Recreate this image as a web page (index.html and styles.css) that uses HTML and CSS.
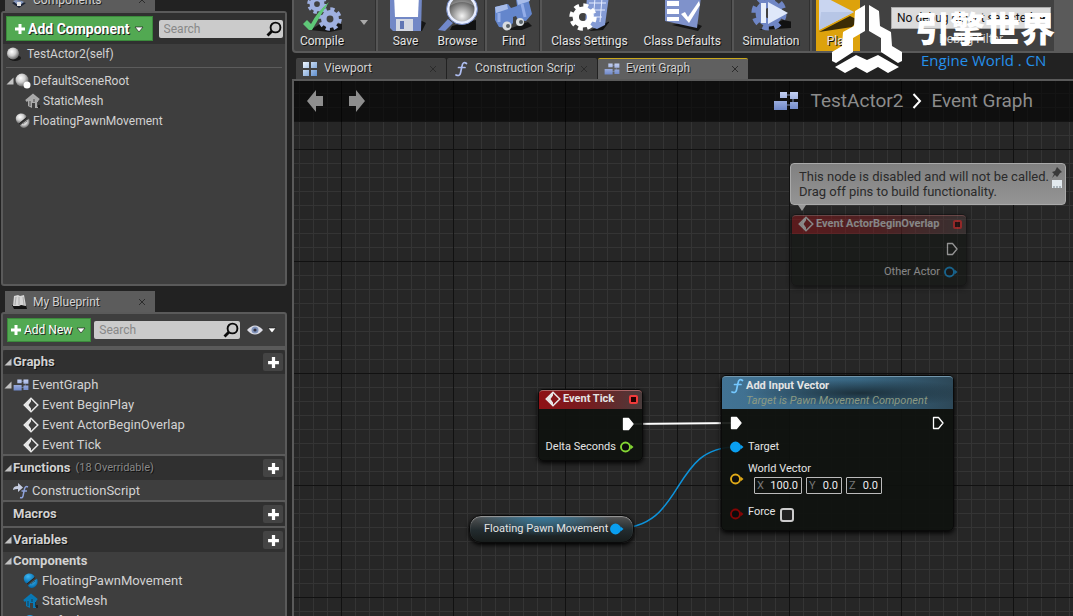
FILE: index.html
```html
<!DOCTYPE html>
<html lang="en">
<head>
    <meta charset="utf-8">
    <title>TestActor2 - Blueprint Editor</title>
    <meta name="viewport" content="width=device-width, initial-scale=1">
    <link rel="stylesheet" href="styles.css">
</head>
<body>
    <!-- Shared icons -->
    <svg class="defs" width="0" height="0">
        <defs>
            <linearGradient id="blue" x1="0" y1="0" x2="0" y2="1">
                <stop offset="0" stop-color="#c3cff2"/>
                <stop offset="1" stop-color="#6f88c8"/>
            </linearGradient>
            <linearGradient id="pane" x1="0" y1="0" x2="1" y2="1">
                <stop offset="0" stop-color="#eef6ff"/>
                <stop offset="1" stop-color="#5f8fce"/>
            </linearGradient>
            <radialGradient id="ball" cx="40%" cy="35%" r="65%">
                <stop offset="0" stop-color="#fff"/>
                <stop offset="0.5" stop-color="#d0d0d0"/>
                <stop offset="1" stop-color="#666"/>
            </radialGradient>
            <radialGradient id="blueBall" cx="40%" cy="30%" r="70%">
                <stop offset="0" stop-color="#3fb8f5"/>
                <stop offset="1" stop-color="#0067a8"/>
            </radialGradient>
            <radialGradient id="lens" cx="50%" cy="75%" r="75%">
                <stop offset="0" stop-color="#f4f4f4"/>
                <stop offset="0.6" stop-color="#777"/>
                <stop offset="1" stop-color="#222"/>
            </radialGradient>
        </defs>
        <symbol id="i-plus" viewBox="0 0 12 12"><path d="M4.500 1h3v3.500H11v3H7.500V11h-3V7.500H1v-3h3.500z" fill="#fff"/></symbol>
        <symbol id="i-down" viewBox="0 0 10 8"><path d="M1 2h8L5 7z" fill="#fff" stroke="#111" stroke-width="0.600"/></symbol>
        <symbol id="i-close" viewBox="0 0 8 8"><path d="M1 1l6 6M7 1L1 7" stroke="currentColor" fill="none"/></symbol>
        <symbol id="i-search" viewBox="0 0 16 16"><circle cx="9.500" cy="6.500" r="4.900" fill="none" stroke="#0a0a0a" stroke-width="1.900"/><path d="M6 10l-4.500 4.500" stroke="#0a0a0a" stroke-width="2.800"/></symbol>
        <symbol id="i-tri" viewBox="0 0 8 8"><path d="M7.500 0.500v7H0.500z" fill="#c2c2c2"/></symbol>
        <symbol id="i-graph" viewBox="0 0 26 20">
            <path d="M12 4h6M13 14h5M20 8v5" stroke="#8191b8" stroke-width="1"/>
            <path d="M7 1h7v6H7zM17 1h8v7h-8zM1 10h13v9H1zM17 11h8v7h-8z" fill="url(#blue)"/>
        </symbol>
        <symbol id="i-event" viewBox="0 0 16 16"><path d="M8 1.200L14.800 8 8 14.800 1.200 8z" fill="none" stroke="#e8e8e8" stroke-width="1.500"/><path d="M8 1.500v3L5.500 8 8 11.500v3L1.500 8z" fill="#e8e8e8"/></symbol>
        <symbol id="i-func" viewBox="0 0 16 16"><path d="M13.500 2.500C11 0.500 9.500 2 9 5L7.500 12C7 14.500 5.500 15 3 14M5.500 6.500h6.500" fill="none" stroke="currentColor" stroke-width="1.700" stroke-linecap="round"/></symbol>
        <symbol id="i-move" viewBox="0 0 16 16"><path d="M1 7C0 3 3 0.500 6.500 0.500 9 0.500 11 2 11.500 4L4 10.500C2.500 10 1.300 8.500 1 7z" fill="var(--orb)"/><path d="M5 12.500L14 5.500c2 4-1 9.500-5.500 9.500-1.500 0-3-1-3.500-2.500z" fill="var(--orb)"/><path d="M4 11L12 4.500" stroke="#222" stroke-width="1"/><path d="M8 11l4-3" stroke="#222" stroke-width="1" opacity=".5"/></symbol>
        <symbol id="i-mesh" viewBox="0 0 16 16"><path d="M11 12l4 0v3h-4z" fill="#111" opacity=".6"/><path d="M3 7l5-4 5 4v8h-3v-5H7v5l-4-2z" fill="var(--mesh)"/><path d="M1 8L8 2l6 5" fill="none" stroke="var(--mesh)" stroke-width="2.400"/><path d="M5 8v5M9 6v3M12.500 9v5" stroke="#222" opacity=".7"/></symbol>
        <symbol id="i-exec" viewBox="0 0 12 14"><path d="M1.500 1.500h5L11 7l-4.500 5.500h-5z" fill="var(--fill, none)" stroke="currentColor" stroke-width="1.300" stroke-linejoin="round"/></symbol>
        <symbol id="i-pin" viewBox="0 0 14 12"><circle cx="5.500" cy="6" r="4.500" fill="var(--fill, #0c0c0c)" stroke="currentColor" stroke-width="1.900"/><path d="M10.500 3.500L13.500 6l-3 2.500z" fill="currentColor"/></symbol>
        <symbol id="i-arrow" viewBox="0 0 18 24"><path d="M1 12L10 1v6h7v10h-7v6z" fill="#8e8e8e"/></symbol>
        <symbol id="i-gear" viewBox="0 0 24 24"><circle cx="12" cy="12" r="9.500" fill="none" stroke="currentColor" stroke-width="4.500" stroke-dasharray="4 3.461"/><circle cx="12" cy="12" r="6.200" fill="none" stroke="currentColor" stroke-width="5.500"/></symbol>
    </svg>

    <div class="editor">
        <aside class="sidebar">
            <div class="dock-tab"><svg class="icon" viewBox="0 0 16 16"><path d="M1 11l4-2 6 1 4 1-7 5z" fill="#1c2434"/><path d="M2 9l3-1 6 1 2 1-5 4z" fill="#8496bd"/><path d="M6 10h4v4H6z" fill="#e4e4e4"/></svg><span>Components</span><svg class="close"><use href="#i-close"/></svg></div>
            <section class="panel components">
                <div class="panel-bar">
                    <button class="add-btn large"><svg class="plus"><use href="#i-plus"/></svg>Add Component<svg class="down"><use href="#i-down"/></svg></button>
                    <label class="search"><input type="text" placeholder="Search" aria-label="Search components"><svg><use href="#i-search"/></svg></label>
                </div>
                <div class="self"><svg class="icon" viewBox="0 0 16 16"><ellipse cx="9" cy="12" rx="6" ry="3" fill="#181818"/><circle cx="7" cy="7.500" r="6" fill="url(#ball)"/></svg>TestActor2(self)</div>
                <ul class="tree parts">
                    <li class="root"><svg class="tri"><use href="#i-tri"/></svg><svg class="icon" viewBox="0 0 16 16"><circle cx="7" cy="7" r="6.500" fill="url(#ball)"/><circle cx="12" cy="12" r="3.500" fill="#fff"/></svg>DefaultSceneRoot</li>
                    <li class="child"><svg class="icon"><use href="#i-mesh"/></svg>StaticMesh</li>
                    <li class="peer"><svg class="icon"><use href="#i-move"/></svg>FloatingPawnMovement</li>
                </ul>
            </section>

            <div class="dock-tab second"><svg class="icon" viewBox="0 0 16 16"><path d="M1 11h14l1 4H3z" fill="#111"/><path d="M3 2l4-1 2 1 4-1 2 11-5-1-2 1-6 0z" fill="#d5d5d5"/><path d="M8 3v8M5 3l-1 8M12 3l1 8" stroke="#aaa"/></svg><span>My Blueprint</span><svg class="close"><use href="#i-close"/></svg></div>
            <section class="panel blueprint">
                <div class="panel-bar">
                    <button class="add-btn"><svg class="plus"><use href="#i-plus"/></svg>Add New<svg class="down"><use href="#i-down"/></svg></button>
                    <label class="search"><input type="text" placeholder="Search" aria-label="Search blueprint"><svg><use href="#i-search"/></svg></label>
                    <button class="view-btn" aria-label="View options"><svg class="eye" viewBox="0 0 18 12"><path d="M1 6q8-9 16 0-8 9-16 0z" fill="#dcdce4"/><circle cx="9" cy="6" r="3.500" fill="#8093ba"/><circle cx="9" cy="6" r="1.600" fill="#334"/></svg><svg class="down"><use href="#i-down"/></svg></button>
                </div>
                <div class="group">
                    <h2><svg class="tri"><use href="#i-tri"/></svg>Graphs<button aria-label="Add graph"><svg><use href="#i-plus"/></svg></button></h2>
                    <ul class="tree">
                        <li class="graph-item"><svg class="tri"><use href="#i-tri"/></svg><svg class="icon"><use href="#i-graph"/></svg>EventGraph</li>
                        <li class="leaf"><svg class="icon"><use href="#i-event"/></svg>Event BeginPlay</li>
                        <li class="leaf"><svg class="icon"><use href="#i-event"/></svg>Event ActorBeginOverlap</li>
                        <li class="leaf"><svg class="icon"><use href="#i-event"/></svg>Event Tick</li>
                    </ul>
                </div>
                <div class="group">
                    <h2><svg class="tri"><use href="#i-tri"/></svg>Functions <small>(18 Overridable)</small><button aria-label="Add function"><svg><use href="#i-plus"/></svg></button></h2>
                    <ul class="tree">
                        <li class="script"><svg class="icon" viewBox="0 0 16 16"><path d="M0 7q0-4 5-4V0l5 4.500L5 9V6Q2 6 0 7z" fill="#c6cde0"/><path d="M15 4c-2-1-3 0-3.500 2L10 13c-.5 2-1.500 2-3 1.500M8.500 8H14" fill="none" stroke="#8fa3dc" stroke-width="1.500"/></svg>ConstructionScript</li>
                    </ul>
                </div>
                <div class="group">
                    <h2 class="no-tri">Macros<button aria-label="Add macro"><svg><use href="#i-plus"/></svg></button></h2>
                </div>
                <div class="group">
                    <h2><svg class="tri"><use href="#i-tri"/></svg>Variables<button aria-label="Add variable"><svg><use href="#i-plus"/></svg></button></h2>
                    <h3><svg class="tri"><use href="#i-tri"/></svg>Components</h3>
                    <ul class="tree">
                        <li class="leaf"><svg class="icon azure"><use href="#i-move"/></svg>FloatingPawnMovement</li>
                        <li class="leaf"><svg class="icon azure"><use href="#i-mesh"/></svg>StaticMesh</li>
                        <li class="leaf"><svg class="icon" viewBox="0 0 16 16"><circle cx="7" cy="8" r="6" fill="url(#blueBall)"/></svg>DefaultSceneRoot</li>
                    </ul>
                </div>
            </section>
        </aside>

        <main class="workspace">
            <div class="toolbar">
                <div class="tool-group compile">
                    <button class="tool"><svg viewBox="0 0 40 40"><path d="M8 38l10-6h22l2 5-14 3z" fill="#151515"/><g color="#9fb0e0"><use href="#i-gear" x="5" y="2" width="20" height="20"/><use href="#i-gear" x="16" y="15" width="24" height="24"/></g><path d="M1 32l4-4 4 4Q15 20 27 10 18 24 10 38H7z" fill="#5fc878"/></svg>Compile</button>
                    <button class="tool-menu" aria-label="Compile options"><svg viewBox="0 0 8 5"><path d="M0 0h8L4 5z" fill="#aaa"/></svg></button>
                </div>
                <div class="tool-group save">
                    <button class="tool"><svg viewBox="0 0 40 40"><path d="M10 39h26l4-8-4-2z" fill="#151515"/><path d="M4 3h32l-1 36H7l-3-3z" fill="#7288c6"/><path d="M8 3h25l-1 22H9z" fill="#fff"/><path d="M10 27h17v12H10z" fill="#d3d8e2"/><path d="M14 29h4v8h-4z" fill="#6076b4"/></svg>Save</button>
                    <button class="tool"><svg viewBox="0 0 40 40"><path d="M14 34l24-6v10H12z" fill="#111"/><path d="M0 38l10-11 5 4-8 8z" fill="#7188cb"/><circle cx="24" cy="17" r="14" fill="url(#lens)" stroke="#e7edff" stroke-width="3"/><circle cx="24" cy="17" r="15.500" fill="none" stroke="#6e83bd"/><path d="M12 14q12-8 24 0V9q-10-9-21-2z" fill="#fff" opacity=".25"/></svg>Browse</button>
                </div>
                <div class="tool-group find">
                    <button class="tool"><svg viewBox="0 0 40 40"><path d="M12 38l22-8 4 4-10 4z" fill="#151515"/><path d="M1 15l13-3 3 4 6-2-1-7 11-5 5 20-6 7-8-1-2-4-3 1v6l-5 5-9-1-4-7z" fill="#6486cc"/><path d="M1 15l12-3 1 5-12 4zM23 8l11-5 2 6-12 4z" fill="#a7bce9"/><path d="M5 21v9M28 12l3 13" stroke="#93ade8" stroke-width="3"/><circle cx="13" cy="34" r="4.500" fill="#d8dcdf"/><circle cx="26" cy="30" r="4" fill="#d8dcdf"/><circle cx="14" cy="34" r="2" fill="#596268"/><circle cx="27" cy="30" r="2" fill="#596268"/></svg>Find</button>
                </div>
                <div class="tool-group class-tools">
                    <button class="tool"><svg viewBox="0 0 40 40"><path d="M20 39l14-1 7-9z" fill="#111"/><path d="M18 4h22l-4 29-8 4-12-4z" fill="#849bd5"/><path d="M20 11h17M20 18h16M20 25h13M26 6l-2 24M33 6l-2 24" stroke="#e3ebff"/><g color="#fff"><use href="#i-gear" x="0" y="11" width="28" height="28"/></g></svg>Class Settings</button>
                    <button class="tool"><svg viewBox="0 0 40 40"><path d="M10 33l26 6 4-5-12-5z" fill="#151515"/><path d="M3 5h36l-4 31-32-7z" fill="#7f92cb"/><path d="M5 9h12v5H5zM5 17h12v5H5zM5 25h12v4H5z" fill="#fff"/><path d="M19 22l4-2 3 5L37 9l1 4-11 18z" fill="#fff"/></svg>Class Defaults</button>
                </div>
                <div class="tool-group simulation">
                    <button class="tool"><svg viewBox="0 0 40 40"><path d="M8 38l24-10 10 2-2 6z" fill="#111"/><g color="#6f86c5"><use href="#i-gear" x="0" y="3" width="36" height="36"/></g><path d="M10 11h5v20h-5z" fill="#e8effa"/><path d="M17 10l20 11-20 11z" fill="#dfe8fa"/></svg>Simulation</button>
                </div>
                <button class="tool play"><svg viewBox="0 0 40 40"><path d="M1 40l31-16 8 4-6 7z" fill="#3b2c05"/><path d="M1 2l35 18L1 38z" fill="#c9d5f0"/><path d="M1 38L3 20l33 0z" fill="#b7c6e6"/></svg>Play</button>
                <div class="debug">
                    <select id="debugObject"><option>No debug object selected</option></select>
                    <label for="debugObject">Debug Filter</label>
                </div>
            </div>

            <nav class="doc-tabs">
                <a href="#viewport"><svg class="icon" viewBox="0 0 16 16"><path d="M1 1h6v6H1zM9 1h6v6H9zM1 9h6v6H1zM9 9h6v6H9z" fill="url(#pane)"/></svg><span>Viewport</span><svg class="close"><use href="#i-close"/></svg></a>
                <a href="#construction"><svg class="icon func"><use href="#i-func"/></svg><span>Construction Script</span><svg class="close"><use href="#i-close"/></svg></a>
                <a href="#graph" class="active"><svg class="icon"><use href="#i-graph"/></svg><span>Event Graph</span><svg class="close"><use href="#i-close"/></svg></a>
            </nav>

            <div class="graph" id="graph">
                <header class="graph-bar">
                    <button aria-label="Back"><svg><use href="#i-arrow"/></svg></button>
                    <button class="forward" aria-label="Forward"><svg><use href="#i-arrow"/></svg></button>
                    <div class="crumbs"><svg class="crumb-icon"><use href="#i-graph"/></svg><a href="#actor">TestActor2</a><svg class="chevron" viewBox="0 0 10 16"><path d="M1.500 1L8 8l-6.500 7" fill="none" stroke="#fff" stroke-width="2"/></svg><span>Event Graph</span></div>
                </header>

                <svg class="wires">
                    <path d="M334 343L440 342" stroke="#fff" stroke-width="2"/>
                    <path d="M320 448C394 448 374 366 442 366" stroke="#0d93db" stroke-width="1.500"/>
                </svg>

                <div class="bubble">
                    <p>This node is disabled and will not be called.<br>Drag off pins to build functionality.</p>
                    <svg viewBox="0 0 12 24"><path d="M6 1l5 5-2 1-2 3-1 1-2-2-3 3 2-4-2-2 3-1z" fill="#3a3a3a"/><path d="M1 14h10v8H1z" fill="#e2e9ee"/><path d="M3 20v2M6 20v2M9 20v2" stroke="#73818b"/></svg>
                </div>

                <article class="node overlap">
                    <h4><svg class="icon"><use href="#i-event"/></svg>Event ActorBeginOverlap<i class="delegate"></i></h4>
                    <div class="pin out exec"><svg class="exec-pin"><use href="#i-exec"/></svg></div>
                    <div class="pin out"><span>Other Actor</span><svg class="data-pin object"><use href="#i-pin"/></svg></div>
                </article>

                <article class="node tick">
                    <h4><svg class="icon"><use href="#i-event"/></svg>Event Tick<i class="delegate"></i></h4>
                    <div class="pin out exec"><svg class="exec-pin linked"><use href="#i-exec"/></svg></div>
                    <div class="pin out"><span>Delta Seconds</span><svg class="data-pin float"><use href="#i-pin"/></svg></div>
                </article>

                <article class="node getter"><span>Floating Pawn Movement</span><svg class="data-pin object linked"><use href="#i-pin"/></svg></article>

                <article class="node add-input">
                    <header>
                        <svg class="icon"><use href="#i-func"/></svg>
                        <div><h4>Add Input Vector</h4><p>Target is Pawn Movement Component</p></div>
                    </header>
                    <div class="pin ends"><svg class="exec-pin linked"><use href="#i-exec"/></svg><svg class="exec-pin"><use href="#i-exec"/></svg></div>
                    <div class="pin target"><svg class="data-pin object linked"><use href="#i-pin"/></svg><span>Target</span></div>
                    <div class="pin vector"><svg class="data-pin vec"><use href="#i-pin"/></svg>
                        <div class="value">
                            <span>World Vector</span>
                            <div class="axes">
                                <label class="wide">X<input type="text" value="100.0"></label>
                                <label>Y<input type="text" value="0.0"></label>
                                <label>Z<input type="text" value="0.0"></label>
                            </div>
                        </div>
                    </div>
                    <div class="pin force"><svg class="data-pin bool"><use href="#i-pin"/></svg><label class="value" for="force">Force</label><input type="checkbox" id="force"></div>
                </article>
            </div>
        </main>
    </div>

    <!-- Site watermark -->
    <div class="watermark">
        <svg viewBox="0 0 72 70"><path d="M33 1L23 7 22 22 11 28 10 42 0 48v9l4 2 17-11V34l12-7zM37 1l10 6 1 15 11 6 1 14 10 6v9l-4 2-17-11V34l-12-7zM3 63l21-12 11 5 11-5 21 12-11 6-10-6-11 6-11-6-11 6z" fill="#fff"/></svg>
        <div><strong lang="zh">引擎世界</strong><span>Engine World . CN</span></div>
    </div>
</body>
</html>
```
FILE: styles.css
```css
* {
    box-sizing: border-box;
}
body {
    margin: 0;
    height: 100vh;
    overflow: hidden;
    background: #222;
    color: #d2d2d2;
    font: 13px/20px Roboto, sans-serif;
}
button, input, select {
    font: inherit;
    color: inherit;
}
button {
    padding: 0;
    border: 0;
    background: none;
}
ul, h2, h3, h4, p {
    margin: 0;
    padding: 0;
    list-style: none;
}
svg {
    flex: none;
}
.defs {
    position: absolute;
}
.editor {
    display: flex;
    gap: 5px;
    height: 100vh;
    overflow: hidden;
}
.icon {
    width: 16px;
    height: 16px;
    --orb: url(#ball);
    --mesh: #aaa;
}
.azure {
    --orb: url(#blueBall);
    --mesh: #0879b5;
}
.func {
    color: #aebdf0;
}
.close {
    width: 8px;
    height: 8px;
    color: #2c2c2c;
}
.plus {
    width: 12px;
    height: 12px;
}
.down {
    width: 10px;
    height: 8px;
}
.tri {
    width: 8px;
    height: 8px;
}

/* Sidebar */
.sidebar {
    flex: none;
    width: 287px;
    margin-top: -11px;
    padding-left: 1px;
}
.dock-tab {
    display: flex;
    align-items: center;
    width: 150px;
    height: 22px;
    margin-left: 4px;
    padding: 0 9px 0 6px;
    background: #5c5c5c;
    font-size: 12px;
    text-shadow: 1px 1px #222;
}
.dock-tab span {
    flex: 1;
    margin-left: 6px;
}
.dock-tab.second {
    height: 21px;
    margin-top: 5px;
}
.panel {
    border: 2px solid #5a5a5a;
    border-radius: 3px;
    background: #3e3e3e;
}
.components {
    height: 275px;
    font-size: 12px;
}
.panel-bar {
    display: flex;
    align-items: center;
    height: 32px;
}
.components .panel-bar {
    padding: 0 2px 0 3px;
    gap: 6px;
    height: 31px;
    background: #303030;
}
.blueprint .panel-bar {
    padding: 0 8px 0 4px;
    gap: 3px;
    margin-bottom: 4px;
    box-shadow: 0 4px #5a5a5a;
}
.add-btn {
    display: flex;
    flex: none;
    align-items: center;
    gap: 2px;
    height: 24px;
    padding: 0 4px 0 2px;
    border: 1px solid #3b8a3c;
    background: #52a952;
    color: #fff;
    font-size: 12px;
    text-shadow: 1px 1px #222;
}
.add-btn .down {
    margin-left: 2px;
}
.add-btn.large {
    height: 25px;
    padding: 0 8px 0 7px;
    gap: 2px;
    font-size: 14px;
    font-weight: bold;
}
.search {
    display: flex;
    flex: 1;
    align-items: center;
    min-width: 0;
    height: 18px;
    padding: 0 1px 0 5px;
    border-radius: 2px;
    background: #cbcbcb;
}
.search input {
    flex: 1;
    min-width: 0;
    padding: 0;
    border: 0;
    background: none;
    color: #222;
    font-size: 12px;
    outline: none;
}
.search input::placeholder {
    color: #888;
}
.search svg {
    width: 16px;
    height: 16px;
}
.view-btn {
    display: flex;
    align-items: center;
    gap: 3px;
    margin-left: 3px;
}
.eye {
    width: 18px;
    height: 12px;
}
.self, .tree li, h3 {
    display: flex;
    align-items: center;
    height: 20px;
    white-space: nowrap;
}
.tree li {
    padding-top: 2px;
}
.self {
    padding-left: 3px;
    gap: 5px;
}
.parts {
    margin: 3px 3px 0;
    padding-top: 2px;
    border-top: 1px solid #5c5c5c;
}
.root .icon {
    margin: 0 2px 0 1px;
}
.child {
    padding-left: 19px;
    gap: 2px;
}
.peer {
    padding-left: 9px;
    gap: 2px;
}
.group {
    border-bottom: 2px solid #5a5a5a;
}
h2 {
    display: flex;
    align-items: center;
    height: 24px;
    padding: 0 2px 0 1px;
    background: #303030;
    border-radius: 3px 3px 0 0;
    font-size: 13px;
    text-shadow: 1px 1px #111;
}
h2.no-tri {
    padding-left: 10px;
}
h2 .tri, h3 .tri {
    margin-right: 1px;
}
h2 small {
    margin-left: 5px;
    color: #888;
    font-size: 11px;
    font-weight: normal;
}
h2 button {
    display: grid;
    place-items: center;
    width: 20px;
    height: 18px;
    margin-left: auto;
    border-radius: 2px;
    background: #444;
}
h2 button svg {
    width: 13px;
    height: 13px;
}
h3 {
    height: 18px;
    padding-left: 1px;
    font-size: 13px;
}
.graph-item {
    padding-left: 1px;
}
.graph-item .icon {
    margin: 0 3px 0 1px;
}
.leaf {
    padding-left: 20px;
    gap: 3px;
}
.script {
    padding-left: 10px;
    gap: 3px;
}

/* Toolbar */
.workspace {
    display: flex;
    flex: 1;
    flex-direction: column;
    min-width: 0;
}
.toolbar {
    display: flex;
    flex: none;
    height: 62px;
    margin-top: -9px;
    border: solid #5a5a5a;
    border-width: 0 19px 2px 2px;
    border-radius: 0 0 0 4px;
    background: #414141;
}
.tool-group {
    display: flex;
    justify-content: center;
    border-right: 2px solid #555;
    box-shadow: inset -1px 0 #303030;
}
.tool {
    display: flex;
    flex-direction: column;
    align-items: center;
    padding-top: 1px;
    color: #e4e4e4;
    font-size: 12px;
    line-height: 18px;
    text-shadow: 1px 1px #111;
    white-space: nowrap;
}
.tool svg {
    width: 40px;
    height: 40px;
}
.compile {
    gap: 16px;
    width: 84px;
    padding-right: 2px;
}
.tool-menu svg {
    width: 8px;
    height: 5px;
}
.save {
    gap: 12px;
    width: 109px;
}
.find {
    width: 55px;
}
.class-tools {
    gap: 16px;
    width: 192px;
    padding-right: 2px;
}
.simulation {
    width: 78px;
    padding-right: 2px;
}
.play {
    width: 44px;
    margin-left: 4px;
    background: #dda20c;
}
.debug {
    display: flex;
    flex-direction: column;
    align-items: center;
    width: 160px;
    margin-left: 31px;
    padding-top: 16px;
    font-size: 12px;
}
.debug select {
    width: 100%;
    height: 22px;
    padding: 0 1px;
    border: 1px solid #aaa;
    background: #dcdcdc;
    color: #111;
}

/* Document tabs */
.doc-tabs {
    display: flex;
    flex: none;
    gap: 1px;
    margin-top: 5px;
    padding-left: 4px;
}
.doc-tabs a {
    display: flex;
    align-items: center;
    width: 150px;
    height: 21px;
    padding: 0 9px 0 6px;
    border-top: 1px solid #444;
    border-radius: 2px 2px 0 0;
    background: #414141;
    color: #d2d2d2;
    font-size: 12px;
    line-height: 18px;
    text-decoration: none;
    text-shadow: 1px 1px #181818;
}
.doc-tabs span {
    flex: 1;
    overflow: hidden;
    margin: 0 5px 2px 6px;
    white-space: nowrap;
}
.doc-tabs .active {
    border-color: #c9a81c;
    background: #606060;
}

/* Graph canvas */
.graph {
    position: relative;
    flex: 1;
    overflow: hidden;
    border: solid #5a5a5a;
    border-width: 2px 0 0 2px;
    background-color: #262626;
    background-image:
        linear-gradient(90deg, #111 1px, transparent 1px),
        linear-gradient(#111 1px, transparent 1px),
        linear-gradient(90deg, #343434 1px, transparent 1px),
        linear-gradient(#343434 1px, transparent 1px);
    background-size: 112px 112px, 112px 112px, 14px 14px, 14px 14px;
    background-position: 47px 68px, 47px 68px, 5px 12px, 5px 12px;
}
.graph-bar {
    display: flex;
    align-items: center;
    height: 41px;
    padding: 0 40px 2px 12px;
    gap: 24px;
    background: rgba(0, 0, 0, 0.6);
}
.graph-bar button svg {
    display: block;
    width: 18px;
    height: 24px;
}
.forward svg {
    transform: scaleX(-1);
}
.crumbs {
    display: flex;
    align-items: center;
    margin-left: auto;
    color: #8c8c8c;
    font-size: 19px;
}
.crumbs a {
    color: inherit;
    text-decoration: none;
}
.crumb-icon {
    width: 26px;
    height: 20px;
    margin-right: 12px;
}
.chevron {
    width: 10px;
    height: 16px;
    margin: 0 9px;
}
.wires {
    position: absolute;
    top: 0;
    left: 0;
    width: 100%;
    height: 100%;
    fill: none;
}
.bubble {
    position: absolute;
    top: 82px;
    left: 496px;
    display: flex;
    justify-content: space-between;
    width: 276px;
    height: 42px;
    padding: 5px 2px 0 8px;
    border: 1px solid #aaa;
    border-radius: 4px;
    background: linear-gradient(#808080, #949494);
    color: #2a2a2a;
    line-height: 15px;
    white-space: nowrap;
}
.bubble::after {
    content: "";
    position: absolute;
    top: 41px;
    left: 7px;
    border: 4px solid transparent;
    border-top: 6px solid #999;
}
.bubble p {
    width: 0;
}
.bubble svg {
    width: 12px;
    height: 24px;
    margin-top: -3px;
}
.node {
    position: absolute;
    border: 1px solid #0a0a0a;
    border-radius: 5px;
    background: rgba(14, 17, 14, 0.92);
    box-shadow: 0 2px 5px #000;
    color: #e4e4e4;
    font-size: 11px;
    line-height: 16px;
    white-space: nowrap;
}
.node h4 {
    display: flex;
    align-items: center;
    font-size: 11px;
}
.node > h4 {
    height: 19px;
    padding: 0 4px 2px 6px;
    gap: 2px;
    border-radius: 4px 4px 0 0;
    border-top: 1px solid #a66;
    background: linear-gradient(90deg, #8f1115, #741d20 50%, #4a3c3c);
}
.delegate {
    width: 9px;
    height: 9px;
    margin-left: auto;
    border: 2px solid #f03b3b;
    border-radius: 2px;
    background: #200;
}
.pin {
    display: flex;
    align-items: center;
    height: 16px;
    gap: 4px;
}
.pin.out {
    justify-content: flex-end;
    padding-right: 8px;
}
.pin.exec {
    height: 30px;
}
.exec-pin {
    width: 12px;
    height: 14px;
    color: #fff;
}
.exec-pin.linked {
    --fill: #fff;
}
.data-pin {
    width: 14px;
    height: 12px;
}
.object {
    color: #0a9ff0;
}
.object.linked {
    --fill: #0a9ff0;
}
.float {
    color: #84d634;
}
.vec {
    color: #e0aa18;
}
.bool {
    color: #850505;
}
.overlap {
    top: 133px;
    left: 497px;
    width: 176px;
    height: 72px;
    opacity: 0.5;
}
.overlap .delegate {
    border-color: #ff2a2a;
}
.tick {
    top: 308px;
    left: 244px;
    width: 105px;
    height: 72px;
}
.getter {
    top: 434px;
    left: 175px;
    display: flex;
    align-items: center;
    gap: 2px;
    width: 165px;
    height: 28px;
    padding: 0 10px 0 14px;
    border-radius: 12px;
    box-shadow: 0 2px 4px #000, inset 0 1px 1px #999;
    background: radial-gradient(ellipse at 45% 0, #347a9e, transparent 55%), linear-gradient(#555, #222b2e 55%, #181c1b);
}
.add-input {
    top: 294px;
    left: 427px;
    width: 233px;
    height: 156px;
}
.add-input header {
    display: flex;
    gap: 1px;
    height: 33px;
    padding: 1px 7px 0;
    border-top: 1px solid #7396ab;
    border-radius: 4px 4px 0 0;
    background: radial-gradient(ellipse at 60% 50%, #1c303b, transparent 60%), linear-gradient(90deg, #427394, #396783 60%, #2d4858);
}
.add-input header .icon {
    color: #74c8ff;
}
.add-input header p {
    color: #8b9a83;
    font-style: italic;
    line-height: 14px;
}
.add-input .pin {
    padding-left: 8px;
}
.add-input .ends {
    justify-content: space-between;
    height: 28px;
    padding-right: 9px;
}
.add-input .target {
    height: 20px;
}
.add-input .vector {
    height: 44px;
}
.add-input .force {
    height: 26px;
}
.value {
    margin-bottom: 4px;
}
.axes {
    display: flex;
    gap: 4px;
    margin-left: 6px;
}
.axes label {
    display: flex;
    width: 36px;
    height: 17px;
    padding: 0 3px 0 2px;
    border: 1px solid #bbb;
    border-radius: 1px;
    color: #777;
    line-height: 15px;
}
.axes .wide {
    width: 48px;
}
.axes input {
    flex: 1;
    width: 0;
    padding: 0;
    border: 0;
    background: none;
    color: #eee;
    text-align: right;
}
.force input {
    appearance: none;
    width: 14px;
    height: 14px;
    margin: 2px 0 0 1px;
    border: 2px solid #ccc;
    border-radius: 3px;
    background: #222;
}

/* Watermark */
.watermark {
    position: absolute;
    top: 4px;
    right: 18px;
    display: flex;
    gap: 11px;
    pointer-events: none;
}
.watermark svg {
    width: 72px;
    height: 70px;
}
.watermark div {
    display: flex;
    flex-direction: column;
}
.watermark strong {
    color: #fff;
    font: 900 35px/46px "Noto Sans CJK SC", sans-serif;
}
.watermark span {
    margin-left: 6px;
    color: #2590ea;
    font: 15px/20px "Open Sans", sans-serif;
}
```
